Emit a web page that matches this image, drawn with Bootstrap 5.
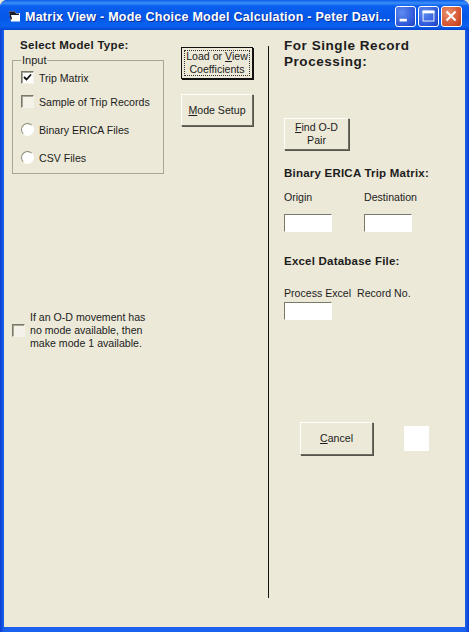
<!DOCTYPE html>
<html lang="en">
<head>
<meta charset="utf-8">
<title>Matrix View</title>
<link href="https://cdn.jsdelivr.net/npm/bootstrap@5.3.0/dist/css/bootstrap.min.css" rel="stylesheet">
<style>
html,body{margin:0;padding:0;background:#ece9d8;}
body{width:469px;height:632px;overflow:hidden;font-family:"Liberation Sans",Arial,sans-serif;font-size:10.6px;line-height:14px;color:#1c1c1c;}
.xp-window{width:469px;height:632px;border-radius:7px 7px 0 0;padding:0 4px 5px;background:linear-gradient(90deg,#0a3fd0 0,#1a62ee 4px,#1a62ee 465px,#0a3fd0 100%);}
.xp-title{height:30px;margin:0 -4px;padding:3px 7px 0 8px;background:linear-gradient(180deg,#0a5be8 0,#3b8ffa 3px,#0a5ff0 6px,#0557e6 18px,#0a62f2 26px,#0346cf 30px);border-radius:7px 7px 0 0;color:#fff;}
.xp-title-text{font-weight:700;font-size:12.5px;letter-spacing:.25px;white-space:nowrap;margin-left:4px;text-shadow:1px 1px 0 #0a2f9c;flex:1;}
.ctl{width:21px;height:21px;border:1px solid #fff;border-radius:3px;background:radial-gradient(circle at 30% 30%,#5f8cf0,#2c56d8 70%,#1c3fb8);margin-left:2px;flex:none;display:block;}
.ctl-close{background:radial-gradient(circle at 30% 30%,#e8906c,#d4502c 70%,#b83a18);}
.xp-client{height:597px;background:#ece9d8;}
.col-left{width:176px;padding:8px 0 0 8px;flex:none;}
.col-mid{width:72px;padding-top:17px;flex:none;margin-left:1px;}
.col-rule{width:1px;height:552px;background:#111;margin:16px 0 0 15px;flex:none;}
.col-right{padding:8px 0 0 15px;flex:1;}
.sel-title{font-weight:700;font-size:11.5px;letter-spacing:.3px;margin:0 0 0 8px;height:16px;line-height:14px;}
.grp{width:152px;height:114px;border:1px solid #a8a698;margin-top:6px;padding:0 0 0 8px;position:relative;}
.grp-legend{position:absolute;left:8px;top:-7px;background:#ece9d8;padding:0 1px;line-height:13px;font-size:11px;}
.opt{display:flex;align-items:center;gap:5px;height:13px;white-space:nowrap;}
.box{width:13px;height:13px;flex:none;background:#fff;border:1px solid;border-color:#7a7868 #f4f2e8 #f4f2e8 #7a7868;box-shadow:inset 1px 1px 0 #a8a698;display:block;}
.box-off{background:#f4f2e8;}
.dot{width:13px;height:13px;flex:none;border-radius:50%;background:#fff;border:1px solid;border-color:#8a8878 #fff #fff #8a8878;display:block;}
.o1{margin-top:10px}.o2{margin-top:11px}.o3{margin-top:15px}.o4{margin-top:15px}
.note{margin:137px 0 0 0;display:flex;align-items:center;gap:5px;font-size:10.6px;line-height:13px;}
.xp-btn{display:block;--bs-btn-padding-x:0;--bs-btn-padding-y:0;--bs-btn-font-size:10.6px;--bs-btn-line-height:13px;--bs-btn-border-radius:0;--bs-btn-color:#1c1c1c;--bs-btn-bg:#ece9d8;--bs-btn-hover-color:#1c1c1c;--bs-btn-hover-bg:#ece9d8;width:72px;height:32px;border:1px solid;border-color:#fffef8 #6e6c60 #6e6c60 #fffef8;box-shadow:1px 1px 0 #55544a;font-family:inherit;}
.xp-default{border:1px solid #111;box-shadow:1px 1px 0 #111;outline:1px dotted #333;outline-offset:-4px;}
.btn-gap{margin-top:15px}
.h-main{font-weight:700;font-size:13.5px;line-height:16px;letter-spacing:.55px;margin:0;}
.find{width:65px;margin-top:48px}
.sub-h{font-weight:700;font-size:11.5px;letter-spacing:.22px;line-height:14px;margin:0;}
.lbl{line-height:14px;height:14px;}
.fld{--bs-border-radius:0;width:48px;height:18px;padding:0;border:1px solid;border-color:#7a7868 #fff #fff #7a7868;background:#fff;border-radius:0;display:block;min-height:0;}
.fld-col{width:80px;flex:none;}
.binary-row{margin-top:10px}
.fld-gap{margin-top:10px}
.xl-h{margin-top:22px}
.xl-lbl{margin-top:18px}
.xl-fld{margin-top:2px}
.cancel-row{margin-top:102px}
.cancel{width:73px;height:33px;margin-left:16px}
.swatch{width:25px;height:25px;background:#fff;margin-left:31px;flex:none;}
</style>
</head>
<body>
<div class="xp-window">
  <div class="xp-title d-flex align-items-center">
    <svg width="13" height="13" viewBox="0 0 13 13" aria-hidden="true"><path d="M1 1.500h6l1 1.500h4v8.500H3z" fill="#fff"/><path d="M1 1.500h6l1 2h3v1.500H3l1 4-1.500 1z" fill="#1a1a2a"/></svg>
    <div class="xp-title-text">Matrix View - Mode Choice Model Calculation - Peter Davi...</div>
    <svg class="ctl" viewBox="0 0 21 21" aria-hidden="true"><rect x="4" y="13" width="8" height="3" fill="#fff"/></svg>
    <svg class="ctl" viewBox="0 0 21 21" aria-hidden="true"><rect x="4.500" y="4.500" width="12" height="11" fill="none" stroke="#fff"/><rect x="4" y="4" width="13" height="3" fill="#fff"/></svg>
    <svg class="ctl ctl-close" viewBox="0 0 21 21" aria-hidden="true"><path d="M5 5l10 10M15 5L5 15" stroke="#fff" stroke-width="2.400"/></svg>
  </div>
  <div class="xp-client d-flex">
    <div class="col-left">
      <div class="sel-title">Select Model Type:</div>
      <div class="grp">
        <div class="grp-legend">Input</div>
        <div class="opt o1"><span class="box d-flex align-items-center justify-content-center"><svg width="9" height="9" viewBox="0 0 9 9" aria-hidden="true"><path d="M1 4l2.500 2.500L8 1.500" fill="none" stroke="#111" stroke-width="1.800"/></svg></span>Trip Matrix</div>
        <div class="opt o2"><span class="box box-off"></span>Sample of Trip Records</div>
        <div class="opt o3"><span class="dot"></span>Binary ERICA Files</div>
        <div class="opt o4"><span class="dot"></span>CSV Files</div>
      </div>
      <div class="note"><span class="box box-off"></span><span>If an O-D movement has<br>no mode available, then<br>make mode 1 available.</span></div>
    </div>
    <div class="col-mid">
      <button type="button" class="btn xp-btn xp-default">Load or <u>V</u>iew<br>Coefficients</button>
      <button type="button" class="btn xp-btn btn-gap"><u>M</u>ode Setup</button>
    </div>
    <div class="col-rule"></div>
    <div class="col-right">
      <p class="h-main">For Single Record<br>Processing:</p>
      <button type="button" class="btn xp-btn find"><u>F</u>ind O-D<br>Pair</button>
      <p class="sub-h mt-3">Binary ERICA Trip Matrix:</p>
      <div class="d-flex binary-row">
        <div class="fld-col"><div class="lbl">Origin</div><input class="form-control fld fld-gap" aria-label="Origin"></div>
        <div class="fld-col"><div class="lbl">Destination</div><input class="form-control fld fld-gap" aria-label="Destination"></div>
      </div>
      <p class="sub-h xl-h">Excel Database File:</p>
      <div class="lbl xl-lbl">Process Excel&nbsp; Record No.</div>
      <input class="form-control fld xl-fld" aria-label="Record No.">
      <div class="d-flex align-items-center cancel-row">
        <button type="button" class="btn xp-btn cancel"><u>C</u>ancel</button>
        <div class="swatch"></div>
      </div>
    </div>
  </div>
</div>
</body>
</html>
